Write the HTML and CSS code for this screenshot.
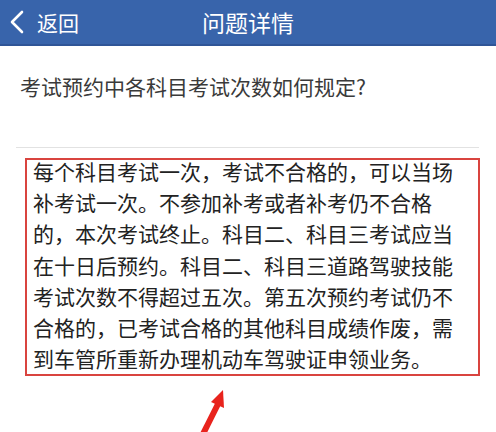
FILE: index.html
```html
<!DOCTYPE html>
<html lang="zh">
<head>
<meta charset="utf-8">
<link rel="stylesheet" href="styles.css">
</head>
<body>
<div class="page">
  <header class="topbar">
    <div class="back">
      <svg class="chev" width="16" height="24" viewBox="0 0 16 24"><path d="M13 2 L3 12 L13 22" fill="none" stroke="#fff" stroke-width="2.6" stroke-linecap="round" stroke-linejoin="round"/></svg>
      <span>返回</span>
    </div>
    <div class="title">问题详情</div>
  </header>
  <div class="question">考试预约中各科目考试次数如何规定?</div>
  <div class="divider"></div>
  <div class="answer-box">
    <p class="answer">每个科目考试一次，考试不合格的，可以当场补考试一次。不参加补考或者补考仍不合格的，本次考试终止。科目二、科目三考试应当在十日后预约。科目二、科目三道路驾驶技能考试次数不得超过五次。第五次预约考试仍不合格的，已考试合格的其他科目成绩作废，需到车管所重新办理机动车驾驶证申领业务。</p>
  </div>
  <svg class="arrow" width="60" height="60" viewBox="0 0 60 60">
    <path d="M14 62 L36 18" stroke="#e8231d" stroke-width="6" fill="none"/>
    <path d="M41 4 L29 16 L42 22 Z" fill="#e8231d"/>
  </svg>
</div>
</body>
</html>
```
FILE: styles.css
```css
html, body {
  margin: 0;
  padding: 0;
  background: #fff;
}
.page {
  position: relative;
  width: 496px;
  height: 432px;
  overflow: hidden;
  font-family: "Noto Sans CJK SC", "Noto Sans", sans-serif;
}
.topbar {
  position: relative;
  height: 44px;
  background: #3864ab;
  border-bottom: 2px solid #2f5597;
  display: flex;
  align-items: center;
  color: #fff;
}
.back {
  display: flex;
  align-items: center;
  gap: 12px;
  padding-left: 9px;
  font-size: 21px;
}
.chev {
  display: block;
}
.title {
  position: absolute;
  left: 0;
  right: 0;
  text-align: center;
  font-size: 23px;
  pointer-events: none;
}
.question {
  margin: 25px 0 0 20px;
  font-size: 21px;
  line-height: 30px;
  color: #3a3a3a;
}
.divider {
  margin: 46px 17px 0 16px;
  height: 1px;
  background: #e2e2e2;
}
.answer-box {
  margin: 10px 16px 0 25px;
  border: 2px solid #d9443f;
  padding: 0 0 0 6px;
}
.answer {
  margin: -4px 0 0 0;
  width: 428px;
  font-size: 21px;
  line-height: 31.2px;
  color: #222;
}
.arrow {
  position: absolute;
  left: 182px;
  top: 386px;
}
```
